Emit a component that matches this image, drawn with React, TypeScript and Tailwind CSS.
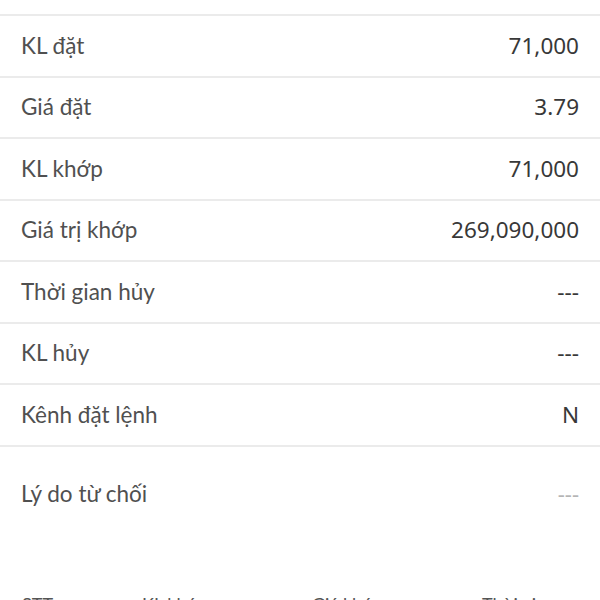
import React from "react"

const rows = [
  { label: "KL đặt", value: "71,000" },
  { label: "Giá đặt", value: "3.79" },
  { label: "KL khớp", value: "71,000" },
  { label: "Giá trị khớp", value: "269,090,000" },
  { label: "Thời gian hủy", value: "---" },
  { label: "KL hủy", value: "---" },
  { label: "Kênh đặt lệnh", value: "N" },
]

const labelFont = "font-['Lato','Noto_Sans',sans-serif]"
const valueFont = "font-['Noto_Sans','Open_Sans',sans-serif]"

export default function App() {
  return (
    <div className="w-[600px] h-[600px] overflow-hidden bg-white">
      <div className="h-[16px] border-b-2 border-[#ebebeb]" />

      {rows.map((row) => (
        <div
          key={row.label}
          className="h-[61.5px] flex items-center justify-between px-[21px] border-b-2 border-[#ebebeb]"
        >
          <span className={`${labelFont} text-[22.5px] text-[#505050]`}>{row.label}</span>
          <span className={`${valueFont} text-[22.5px] text-[#383838]`}>{row.value}</span>
        </div>
      ))}

      <div className="h-[94px] flex items-center justify-between px-[21px]">
        <span className={`${labelFont} text-[22.5px] text-[#505050]`}>Lý do từ chối</span>
        <span className={`${valueFont} text-[22px] text-[#b5b5b5]`}>---</span>
      </div>

      <div className="pt-[50px] grid grid-cols-[120px_170px_170px_1fr] px-[22px]">
        <span className={`${labelFont} text-[18px] text-[#555555]`}>STT</span>
        <span className={`${labelFont} text-[18px] text-[#555555]`}>KL khớp</span>
        <span className={`${labelFont} text-[18px] text-[#555555]`}>Giá khớp</span>
        <span className={`${labelFont} text-[18px] text-[#555555]`}>Thời gian</span>
      </div>
    </div>
  )
}
